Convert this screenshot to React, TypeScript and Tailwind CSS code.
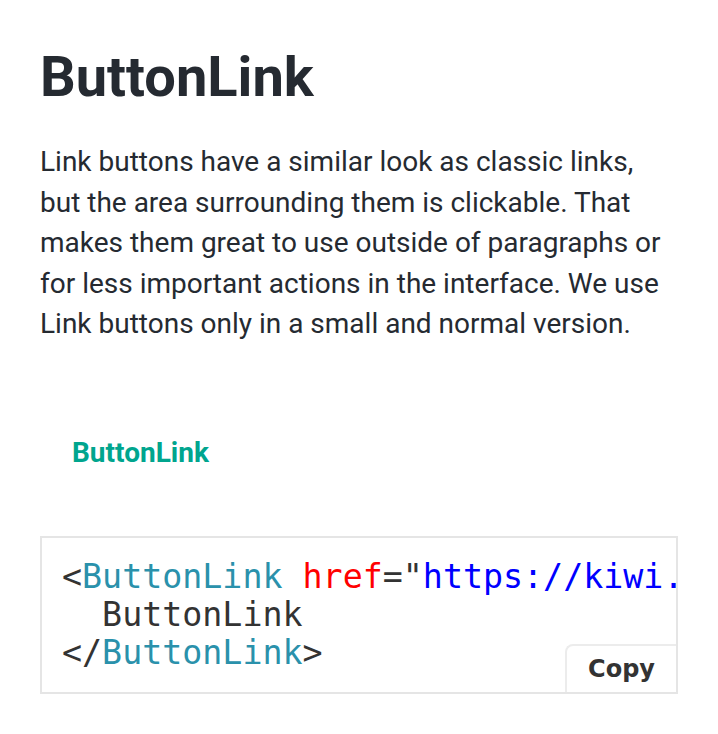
import React from 'react';

const roboto = { fontFamily: 'Roboto, "Liberation Sans", sans-serif' };

export default function App() {
    return (
        <div className="min-h-screen bg-white px-10 pt-11 text-[#252a31]" style={roboto}>
            <h1 className="text-[56px] font-bold leading-[1.2]">ButtonLink</h1>

            <p className="mt-[31px] text-[28px] leading-[40.5px]">
                Link buttons have a similar look as classic links, but the area surrounding them is clickable. That
                makes them great to use outside of paragraphs or for less important actions in the interface. We use
                Link buttons only in a small and normal version.
            </p>

            {/* Example */}
            <div className="mt-16 flex">
                <a
                    href="https://kiwi.com"
                    className="flex h-[88px] items-center rounded-md px-8 text-[28px] font-bold text-[#00a58e]"
                >
                    ButtonLink
                </a>
            </div>

            {/* Code block */}
            <div className="relative mt-[39px] overflow-hidden border-2 border-[#e5e5e5] bg-white">
                <pre
                    className="overflow-hidden whitespace-pre px-5 py-5 text-[33.3px] leading-[38px] text-[#333333]"
                    style={{ fontFamily: '"DejaVu Sans Mono", monospace' }}
                >
                    <span>&lt;</span>
                    <span className="text-[#2a91ab]">ButtonLink</span>{' '}
                    <span className="text-[#ff0000]">href</span>
                    <span>=</span>
                    <span>"</span>
                    <span className="text-[#0000ff]">https://kiwi.com</span>
                    <span>"</span>
                    <span>&gt;</span>
                    {'\n  ButtonLink\n'}
                    <span>&lt;/</span>
                    <span className="text-[#2a91ab]">ButtonLink</span>
                    <span>&gt;</span>
                </pre>
                <button
                    className="absolute bottom-0 right-0 h-12 rounded-tl-lg border-l-2 border-t-2 border-[#ececec] bg-white px-[21px] text-[24px] font-bold text-[#333333]"
                    style={{ fontFamily: '"DejaVu Sans", sans-serif' }}
                >
                    Copy
                </button>
            </div>
        </div>
    );
}
